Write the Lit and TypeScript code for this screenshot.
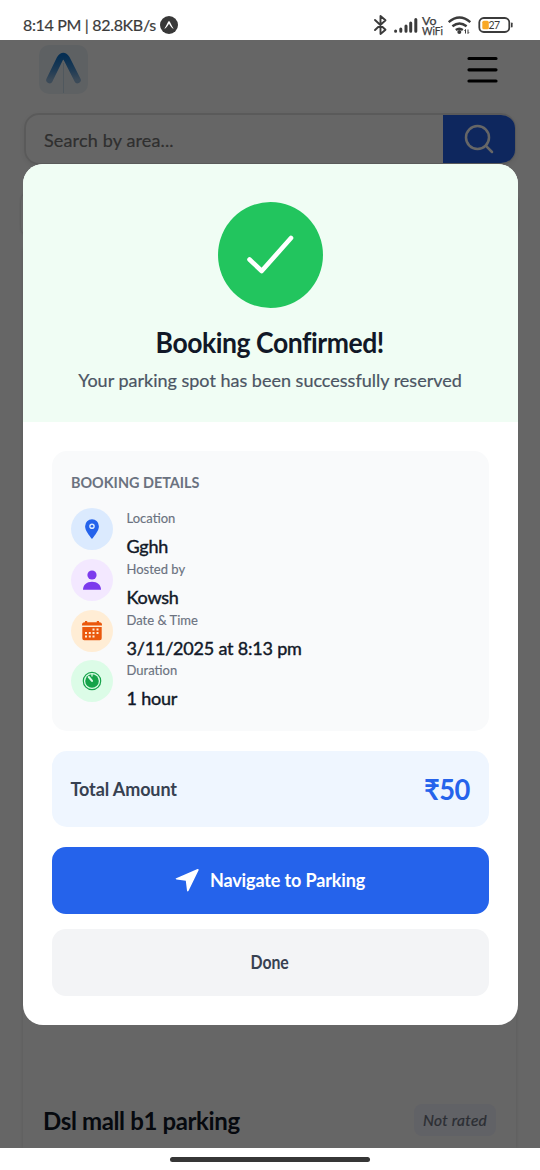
import { LitElement, html, css, svg } from "lit";
import { customElement } from "lit/decorators.js";

const pin = svg`<svg width="24" height="24" viewBox="0 0 24 24"><path fill="#2563eb" fill-rule="evenodd" d="M12 2.300a6.900 6.900 0 0 0-6.900 6.900c0 4.200 3.600 8.300 6.900 12.800 3.300-4.500 6.900-8.600 6.900-12.800A6.900 6.900 0 0 0 12 2.300Zm0 4.200a2.800 2.800 0 1 1 0 5.600 2.800 2.800 0 0 1 0-5.600Z"/><circle cx="12" cy="9.300" r="1.300" fill="#2563eb"/></svg>`;
const person = svg`<svg width="24" height="24" viewBox="0 0 24 24"><circle cx="12" cy="7" r="4.600" fill="#7c3aed"/><path fill="#7c3aed" d="M3 21.700c0-5 3.700-8 9-8s9 3 9 8Z"/></svg>`;
const calendar = svg`<svg width="24" height="24" viewBox="0 0 24 24"><path fill="#ea580c" d="M4.500 3.200H5V2h2.200v1.200h9.600V2H19v1.200h.5A2.500 2.500 0 0 1 22 5.700v.9H2v-.9a2.500 2.500 0 0 1 2.500-2.500ZM2.300 8h19.400v11.200a2 2 0 0 1-2 2H4.300a2 2 0 0 1-2-2Z"/><g fill="#ffedd5"><path d="M12.500 9.500h2v2h-2zM16.500 9.500h2v2h-2zM5 13h2v2H5zM8.800 13h2v2h-2zM12.500 13h2v2h-2zM16.500 13h2v2h-2zM5 16.500h2v2H5zM8.800 16.500h2v2h-2zM12.500 16.500h2v2h-2z"/></g></svg>`;
const timer = svg`<svg width="24" height="24" viewBox="0 0 24 24"><circle cx="12" cy="12" r="8.700" fill="none" stroke="#16a34a" stroke-width="1.200"/><circle cx="12" cy="12" r="6.800" fill="#16a34a"/><path d="M8.800 8l3.200 3.900" stroke="#dcfce7" stroke-width="2.100" stroke-linecap="round"/><path d="M12 4.600v3" stroke="#dcfce7" stroke-width="1.300"/></svg>`;

const details = [
  { icon: pin, tone: "blue", label: "Location", value: "Gghh" },
  { icon: person, tone: "purple", label: "Hosted by", value: "Kowsh" },
  { icon: calendar, tone: "orange", label: "Date & Time", value: "3/11/2025 at 8:13 pm" },
  { icon: timer, tone: "green", label: "Duration", value: "1 hour" },
];

@customElement("status-bar")
export class StatusBar extends LitElement {
  static styles = css`
    :host { display: flex; justify-content: space-between; align-items: center; height: 40px; box-sizing: border-box; padding: 9px 26px 0 23px; background: #fff; color: #3b3b3b; font: 16px/24px Lato, sans-serif; }
    .left, .right { display: flex; align-items: center; }
    .left { gap: 4px; }
    .clock { letter-spacing: -0.33px; white-space: pre; -webkit-text-stroke: .2px #3b3b3b; }
    svg { display: block; }
  `;
  render() {
    return html`
      <div class="left"><span class="clock">8:14 PM | 82.8KB/s</span>
        <svg width="18" height="18" viewBox="0 0 18 18"><circle cx="9" cy="9" r="9" fill="#383838"/><path d="M4.300 12.800C6.500 10 7.400 6.200 9 4.800c1.600 1.400 2.500 5.200 4.700 8-1.800 0-3.200-3-4.700-5-1.500 2-2.900 5-4.700 5Z" fill="#fff"/></svg>
      </div>
      <div class="right">
        <svg width="141" height="24" viewBox="373 12.500 141 24" fill="none" stroke="#3b3b3b">
          <path d="M375 19.500l10.500 9.700-5 4.300V15.500l5 4.300L375 29.500" stroke-width="1.900" stroke-linejoin="round" stroke-linecap="round"/>
          <g stroke-width="3" stroke-linecap="round"><path d="M395.600 30.500v.3M400.800 28.500v2.300M406 25.500v5.300M410.700 22.500v8.300M415.800 19v11.800"/></g>
          <g fill="#3b3b3b" stroke="#3b3b3b" stroke-width=".25" font-family="Lato, sans-serif"><text x="422" y="24" font-size="11.500" textLength="14.500" lengthAdjust="spacingAndGlyphs">Vo</text><text x="422" y="34" font-size="10.500" textLength="21" lengthAdjust="spacingAndGlyphs">WiFi</text></g>
          <g stroke-width="2.400"><path d="M448.700 22.200q10.800-9.200 21.600 0M452.400 26.300q7.100-5.800 14.200 0M455.800 30q3.500-2.500 7 0" transform="translate(0 -.5)"/></g>
          <circle cx="459.300" cy="31.500" r="2" fill="#3b3b3b" stroke="none"/>
          <path d="M465.500 33v-4l-1 1.200M468 29v4l1-1.200" stroke-width="1"/>
          <rect x="479.300" y="17.500" width="30" height="14" rx="4.500" stroke-width="1.800"/>
          <rect x="482.300" y="20.300" width="6.500" height="8.500" rx="1.500" fill="#f9a825" stroke="none"/>
          <path d="M511.800 22.700v3.600" stroke-width="1.600" stroke-linecap="round"/>
          <text x="488.500" y="28.500" font-size="10.500" textLength="11.500" fill="#3b3b3b" stroke="none" font-family="Lato, sans-serif">27</text>
        </svg>
      </div>`;
  }
}

@customElement("parking-page")
export class ParkingPage extends LitElement {
  static styles = css`
    :host { display: flex; flex-direction: column; height: 1108px; background: #fff; box-sizing: border-box; overflow: hidden; }
    .top { display: flex; justify-content: space-between; align-items: center; height: 60px; padding: 0 42px 0 39px; }
    svg { display: block; }
    .search { display: flex; margin: 13px 24px 0 24px; height: 52px; box-sizing: border-box; border: 2px solid #e2e2e2; border-right-width: 1px; border-radius: 15px; overflow: hidden; box-shadow: 0 2px 6px #0001; flex: none; }
    .ph { flex: 1; padding-left: 18px; line-height: 50px; font-size: 18px; color: #757575; letter-spacing: .15px; -webkit-text-stroke: .2px #757575; }
    .go { width: 72px; background: #2563eb; display: grid; place-items: center; }
    .filter { height: 46px; margin: 26px 22px 0 21px; border-radius: 10px; box-shadow: 0 0 3px #0003; flex: none; }
    .card { flex: 1; display: flex; justify-content: space-between; align-items: flex-end; margin: 12px 24px 0 23px; padding: 0 20px 12px; box-shadow: 0 0 4px #0002; }
    .name { font-size: 24px; line-height: 30px; font-weight: 700; color: #111827; letter-spacing: -.37px; }
    .rated { width: 82px; height: 32px; border-radius: 8px; background: #f3f4ff; color: #6b7280; text-align: center; font-size: 15.500px; line-height: 32px; font-style: italic; letter-spacing: .3px; -webkit-text-stroke: .2px #6b7280; }
  `;
  render() {
    return html`
      <div class="top">
        <svg width="49" height="50" viewBox="0 0 49 50">
          <defs><linearGradient id="g" x1="0" y1="0" x2="0" y2="1"><stop stop-color="#0d74cf"/><stop offset=".55" stop-color="#4a92d2"/><stop offset="1" stop-color="#93b8dc"/></linearGradient></defs>
          <rect width="49" height="49" rx="10" fill="#ebf3f8"/><path d="M24.500 18v30" stroke="#c8dcea"/>
          <path d="M10.500 35L21 13.500q3.300-5 6.600 0L38.500 35" fill="none" stroke="url(#g)" stroke-width="6.500" stroke-linejoin="round" stroke-linecap="round"/>
        </svg>
        <svg width="31" height="30" viewBox="0 0 31 30"><path d="M2 3.500h27M2 14.800h27M2 26h27" stroke="#000" stroke-width="3.200" stroke-linecap="round"/></svg>
      </div>
      <div class="search"><div class="ph">Search by area...</div>
        <div class="go"><svg width="30" height="30" viewBox="0 0 30 30" fill="none" stroke="#fff" stroke-width="2.500"><circle cx="13.500" cy="13.500" r="11.500"/><path d="M21.700 21.700l6.300 6.300" stroke-linecap="round"/></svg></div>
      </div>
      <div class="filter"></div>
      <div class="card"><div class="name">Dsl mall b1 parking</div><div class="rated">Not rated</div></div>`;
  }
}

@customElement("booking-dialog")
export class BookingDialog extends LitElement {
  static styles = css`
    :host { display: flex; flex-direction: column; width: 495px; height: 861px; border-radius: 20px; background: #fff; overflow: hidden; }
    svg { display: block; }
    .head { height: 258px; box-sizing: border-box; padding-top: 38px; background: #f0fdf4; display: flex; flex-direction: column; align-items: center; flex: none; }
    .tick { width: 105px; height: 106px; border-radius: 50%; background: #22c55e; }
    .title { margin-top: 16px; font-size: 29px; line-height: 36px; font-weight: 700; color: #111827; letter-spacing: -.5px; white-space: nowrap; transform: scaleX(.915); }
    .sub { margin-top: 8px; font-size: 18px; line-height: 24px; color: #4b5563; white-space: nowrap; -webkit-text-stroke: .2px #4b5563; }
    .body { padding: 29px 29px 0; display: flex; flex-direction: column; }
    .details { height: 280px; box-sizing: border-box; border-radius: 15px; background: #f9fafb; padding: 21px 19px 0; }
    .cap { font-size: 16px; line-height: 20px; font-weight: 700; color: #6b7280; margin-bottom: 16.500px; transform: scaleX(.9); transform-origin: left; }
    .row { display: flex; gap: 14px; height: 50.800px; }
    .dot { width: 42px; height: 42px; border-radius: 50%; display: grid; place-items: center; flex: none; }
    .blue { background: #dbeafe; } .purple { background: #f3e8ff; } .orange { background: #ffedd5; } .green { background: #dcfce7; }
    .label { font-size: 13px; line-height: 20px; color: #6b7280; letter-spacing: 0; -webkit-text-stroke: .15px #6b7280; }
    .value { font-size: 18px; line-height: 24px; margin-top: 6px; color: #111827; letter-spacing: -.2px; -webkit-text-stroke: .4px #111827; }
    .total { margin-top: 20px; height: 76px; box-sizing: border-box; border-radius: 15px; background: #eff6ff; padding: 0 19px; display: flex; align-items: center; justify-content: space-between; }
    .tl { font-size: 18px; font-weight: 700; color: #374151; letter-spacing: -.1px; }
    .amt { font-size: 29px; font-weight: 700; color: #2563eb; letter-spacing: -.5px; transform: scaleX(.94); transform-origin: right; }
    .btn { height: 67px; border-radius: 14px; display: flex; align-items: center; justify-content: center; gap: 11px; font-size: 18px; font-weight: 700; letter-spacing: -.13px; }
    .go { margin-top: 20px; background: #2563eb; color: #fff; }
    .done { margin-top: 15px; background: #f3f4f6; color: #374151; }
    .done span { transform: scaleX(.88); }
  `;
  render() {
    return html`
      <div class="head">
        <div class="tick"><svg width="105" height="106" viewBox="0 0 105 106"><path d="M31.500 57.500L43.700 69 73 36" fill="none" stroke="#fff" stroke-width="4.600" stroke-linecap="round" stroke-linejoin="round"/></svg></div>
        <div class="title">Booking Confirmed!</div>
        <div class="sub">Your parking spot has been successfully reserved</div>
      </div>
      <div class="body">
        <div class="details">
          <div class="cap">BOOKING DETAILS</div>
          ${details.map((d) => html`<div class="row"><div class="dot ${d.tone}">${d.icon}</div><div><div class="label">${d.label}</div><div class="value">${d.value}</div></div></div>`)}
        </div>
        <div class="total"><span class="tl">Total Amount</span><span class="amt">₹50</span></div>
        <div class="btn go"><svg width="24" height="24" viewBox="0 0 24 24"><path d="M22.500 1L1.200 10.200q-1.300.8.300 1.300l9.300 1.200 1.200 10q.6 1.300 1.600.1L23.700 2.100q.1-1.300-1.200-1.100Z" fill="#fff"/></svg><span>Navigate to Parking</span></div>
        <div class="btn done"><span>Done</span></div>
      </div>`;
  }
}

@customElement("app-root")
export class AppRoot extends LitElement {
  static styles = css`
    :host { display: block; width: 540px; height: 1170px; background: #fff; font-family: Lato, "Noto Sans", sans-serif; overflow: hidden; }
    .screen { position: relative; height: 1108px; }
    .scrim { position: absolute; inset: 0; background: rgba(0, 0, 0, .6); display: flex; justify-content: center; align-items: flex-start; padding-top: 123.500px; box-sizing: border-box; }
    .nav { height: 22px; display: grid; place-items: center; }
    .bar { width: 200px; height: 5px; border-radius: 3px; background: #363636; }
  `;
  render() {
    return html`
      <status-bar></status-bar>
      <div class="screen"><parking-page></parking-page><div class="scrim"><booking-dialog></booking-dialog></div></div>
      <div class="nav"><div class="bar"></div></div>`;
  }
}
